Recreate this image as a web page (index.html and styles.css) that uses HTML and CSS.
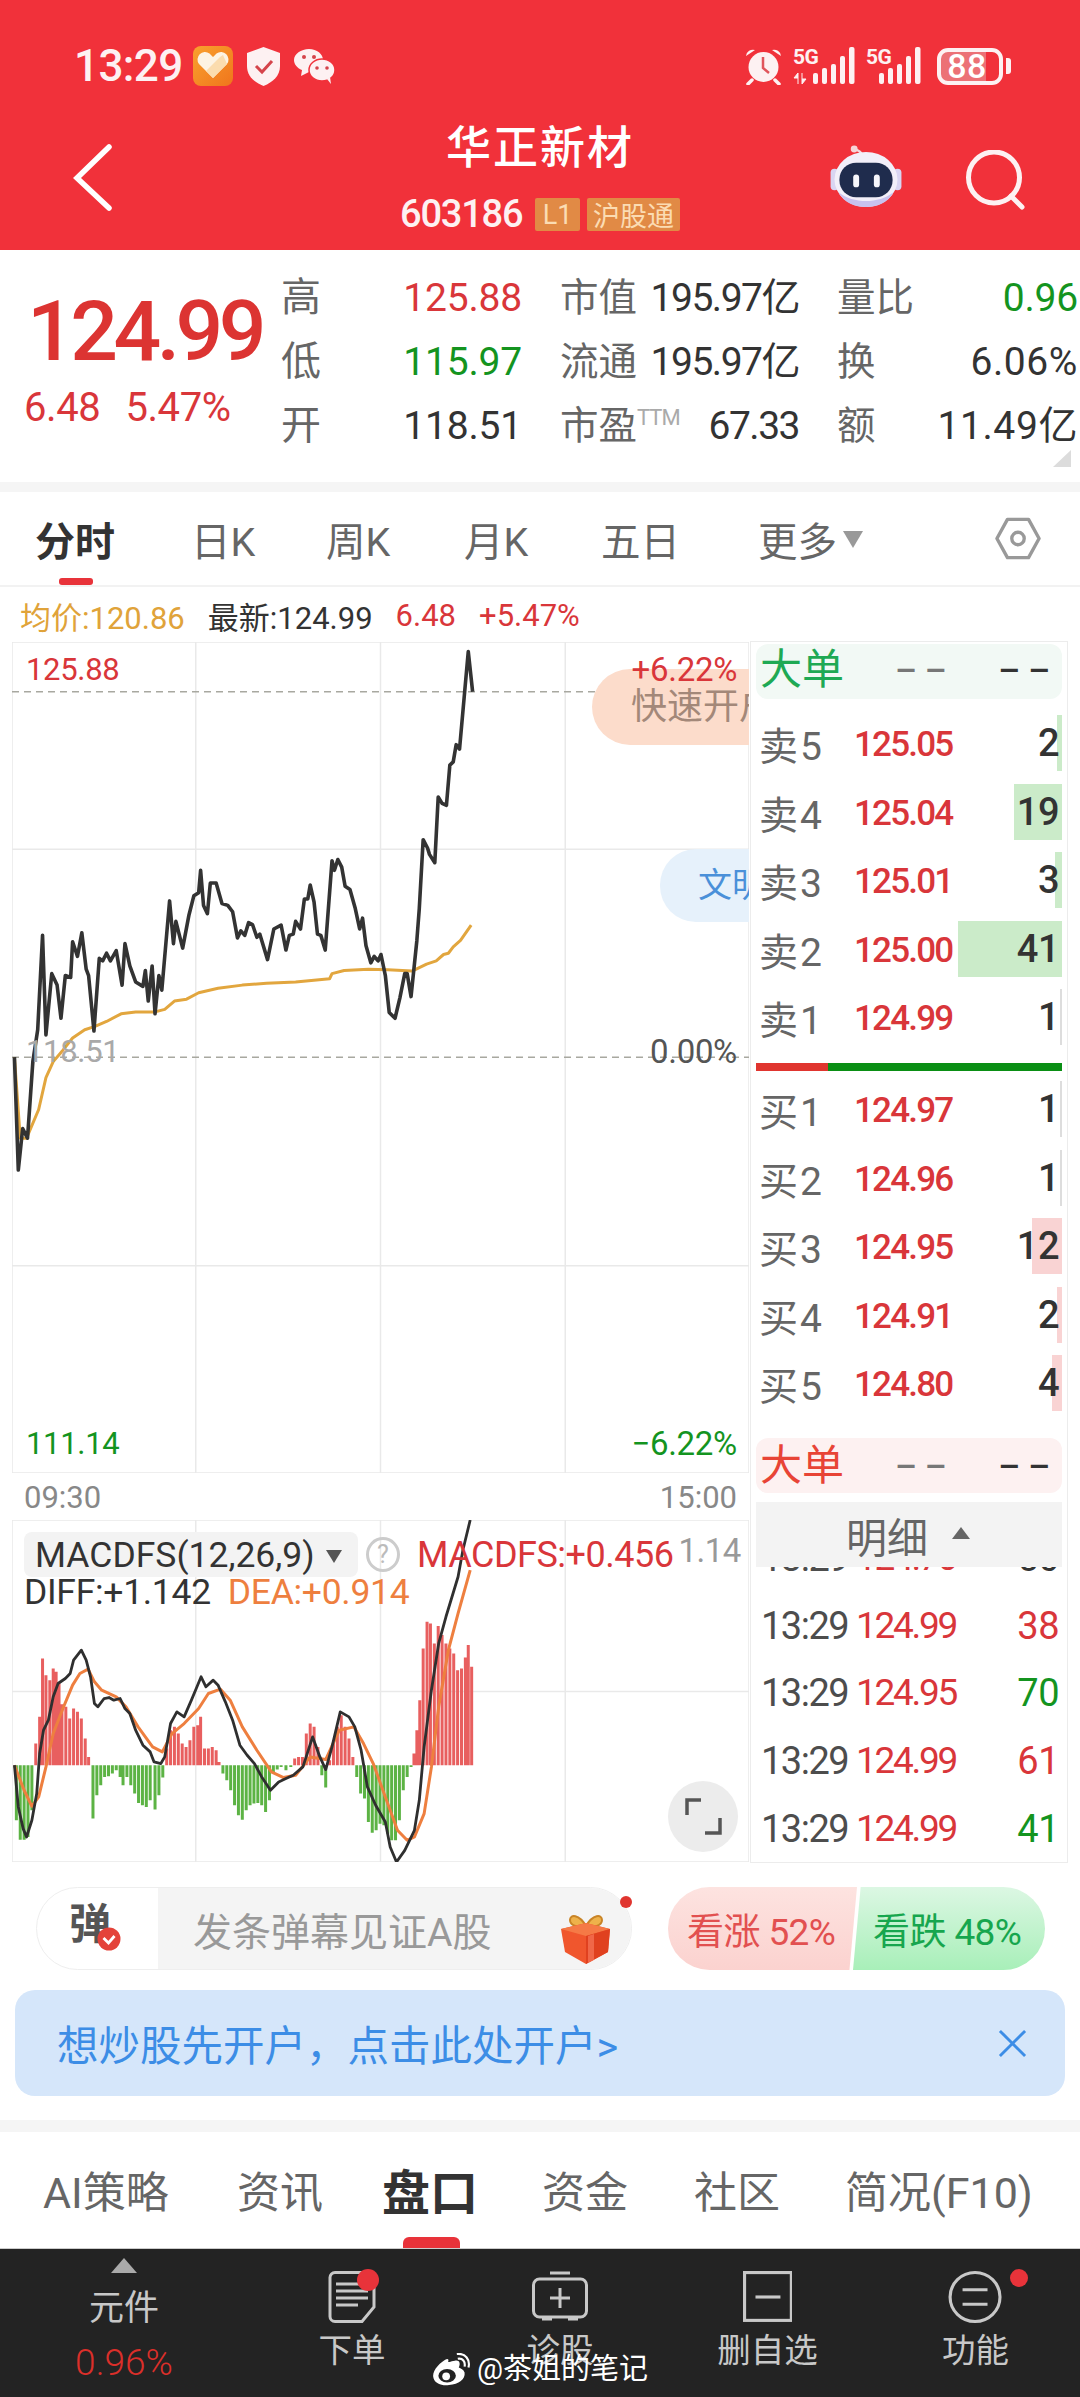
FILE: index.html
```html
<!DOCTYPE html>
<html lang="zh-CN">
<head>
<meta charset="utf-8">
<title>华正新材</title>
<link rel="stylesheet" href="styles.css">
</head>
<body>
<div class="page">
  <header class="appbar">
    <div class="status">
      <div class="status-left">
        <span class="clock">13:29</span>
        <svg class="ic-tile" viewBox="0 0 40 40"><defs><linearGradient id="tile" x1="0" y1="0" x2="1" y2="1"><stop offset="0" stop-color="#f9a12e"/><stop offset="1" stop-color="#f0751c"/></linearGradient></defs><rect width="40" height="40" rx="8" fill="url(#tile)"/><path d="M20 32 6 18a7.5 7.5 0 0 1 10.500-10.500L20 11l3.500-3.500A7.500 7.500 0 0 1 34 18z" fill="#fdf3e3"/><path d="M20 32 13 25 27 11l3-2 4 9z" fill="#fbdcae"/></svg>
        <svg class="ic-shield" viewBox="0 0 35 39"><path d="M17.500 0 34 6v13c0 10-7 16-16.500 20C8 35 1 29 1 19V6z" fill="#fdf1f2"/><path d="M10 19l6 6 10-11" fill="none" stroke="#d5444b" stroke-width="3"/></svg>
        <svg class="ic-wechat" viewBox="0 0 41 35"><path d="M15 0c8 0 14 5 14 11 0 7-6 12-14 12l-8 4 1-6C3 19 0 15 0 11 0 5 7 0 15 0z" fill="#fdf1f2"/><ellipse cx="28" cy="21" rx="13" ry="11" fill="#fdf1f2" stroke="#f1313a" stroke-width="1.500"/><path d="M33 30l4 5-1-7z" fill="#fdf1f2"/><circle cx="10" cy="8" r="2" fill="#d5444b"/><circle cx="20" cy="8" r="2" fill="#d5444b"/><circle cx="23" cy="19" r="1.800" fill="#d5444b"/><circle cx="33" cy="19" r="1.800" fill="#d5444b"/></svg>
      </div>
      <div class="status-right">
        <svg class="ic-alarm" viewBox="0 0 37 38"><circle cx="18.500" cy="20" r="15" fill="#fdf1f2"/><path d="M1 9a7 7 0 0 1 9-6zM36 9a7 7 0 0 0-9-6z" fill="#fdf1f2"/><path d="M7 33l-4 4M30 33l4 4" stroke="#fdf1f2" stroke-width="3.500" stroke-linecap="round"/><path d="M18 10v11l6 5" fill="none" stroke="#e0555c" stroke-width="2.500"/></svg>
        <div class="sig sig1"><span class="sig-txt">5G</span>
          <svg viewBox="0 0 62 38"><path d="M5 37V26l-4 5h4M9 26v11l4-5H9" fill="#fdf1f2" stroke="#fdf1f2" stroke-width="1"/><g fill="#fdf1f2"><rect x="20" y="26" width="5" height="11" rx="2"/><rect x="29" y="21" width="5" height="16" rx="2"/><rect x="38" y="17" width="5" height="20" rx="2"/><rect x="47" y="9" width="5" height="28" rx="2"/><rect x="56" y="0" width="5.500" height="37" rx="2"/></g></svg></div>
        <div class="sig sig2"><span class="sig-txt">5G</span>
          <svg viewBox="0 0 56 38"><g fill="#fdf1f2"><rect x="13" y="26" width="5" height="11" rx="2"/><rect x="22" y="21" width="5" height="16" rx="2"/><rect x="31" y="17" width="5" height="20" rx="2"/><rect x="40" y="9" width="5" height="28" rx="2"/><rect x="49" y="0" width="5.500" height="37" rx="2"/></g></svg></div>
        <div class="battery"><span class="battery-num">88</span></div>
        <span class="battery-nub"></span>
      </div>
    </div>
    <div class="nav">
      <svg class="ic-back" viewBox="0 0 42 68"><path d="M36 3 4 34l32 30" fill="none" stroke="#fff" stroke-width="5.500" stroke-linecap="round"/></svg>
      <div class="nav-center">
        <div class="title">华正新材</div>
        <div class="code"><span class="code-num">603186</span><span class="badge badge-l1">L1</span><span class="badge badge-hk">沪股通</span></div>
      </div>
      <div class="nav-actions">
        <svg class="ic-robot" viewBox="0 0 72 64"><path d="M32 10C30 5 26 5 23 4" fill="none" stroke="#f3d9df" stroke-width="2.500"/><circle cx="24" cy="4" r="3.500" fill="#f6d4d8"/><rect x="0" y="24" width="8" height="22" rx="4" fill="#d9d5f2"/><rect x="64" y="24" width="8" height="22" rx="4" fill="#d9d5f2"/><ellipse cx="36" cy="35" rx="32" ry="28" fill="#f2eff9"/><path d="M8 48c6 11 17 15 28 15s22-4 28-15c-8 6-18 9-28 9S16 54 8 48z" fill="#c8c2ee"/><rect x="9" y="18" width="54" height="35" rx="17" fill="#1f2c4d"/><rect x="23" y="30" width="6" height="13" rx="3" fill="#f6f6fb"/><rect x="44" y="30" width="6" height="13" rx="3" fill="#f6f6fb"/></svg>
        <svg class="ic-search" viewBox="0 0 60 60"><circle cx="29" cy="27.500" r="25.500" fill="none" stroke="#fdf1f2" stroke-width="5"/><path d="M46 46l11 11" stroke="#fdf1f2" stroke-width="5" stroke-linecap="round"/></svg>
      </div>
    </div>
  </header>

  <section class="quote">
    <div class="quote-main">
      <div class="price-big">124.99</div>
      <div class="price-sub"><span>6.48</span><span>5.47%</span></div>
    </div>
    <div class="quote-grid">
      <span class="q-label">高</span><span class="q-val red">125.88</span>
      <span class="q-label q-pad">市值</span><span class="q-val q-tight dark">195.97亿</span>
      <span class="q-label q-pad">量比</span><span class="q-val green">0.96</span>
      <span class="q-label">低</span><span class="q-val green">115.97</span>
      <span class="q-label q-pad">流通</span><span class="q-val q-tight dark">195.97亿</span>
      <span class="q-label q-pad">换</span><span class="q-val q-wide dark">6.06%</span>
      <span class="q-label">开</span><span class="q-val dark">118.51</span>
      <span class="q-label q-pad">市盈<sup class="ttm">TTM</sup></span><span class="q-val q-tight dark">67.33</span>
      <span class="q-label q-pad">额</span><span class="q-val q-wide dark">11.49亿</span>
    </div>
    <span class="corner"></span>
  </section>
  <div class="strip"></div>

  <nav class="period-tabs">
    <span class="ptab ptab-on">分时</span>
    <span class="ptab">日K</span>
    <span class="ptab">周K</span>
    <span class="ptab">月K</span>
    <span class="ptab">五日</span>
    <span class="ptab">更多<i class="caret"></i></span>
    <svg class="ic-hex" viewBox="0 0 48 44"><path d="M13 2h22l11 20-11 20H13L2 22z" fill="none" stroke="#999" stroke-width="3.500" stroke-linejoin="round"/><circle cx="24" cy="22" r="6.500" fill="none" stroke="#999" stroke-width="3.500"/></svg>
  </nav>

  <div class="info-row">
    <span class="orange">均价:120.86</span>
    <span class="dark">最新:124.99</span>
    <span class="red">6.48</span>
    <span class="red">+5.47%</span>
  </div>

  <div class="board">
    <div class="charts">
      <div class="main-chart">
        <svg class="chart-svg" viewBox="25 222 1520 1303" preserveAspectRatio="none">
          <rect x="25" y="222" width="1520" height="1303" class="grid"/>
          <path d="M404 222V1525M785 222V1525M1166 222V1525M25 547H1545M25 1200H1545" class="grid"/>
          <path d="M25 300H1545M25 873H1545" class="dash"/>
          <polyline class="avg" points="30,873 42,1000 55,1000 80,955 95,905 110,880 130,862 150,843 175,830 195,825 220,817 250,805 280,802 320,802 340,798 360,785 385,782 410,772 450,765 500,760 550,757 610,755 680,750 685,742 710,737 760,735 800,736 850,738 880,727 900,722 915,712 925,710 935,700 950,690 972,666"/>
          <polyline class="px" points="30,873 38,1050 47,985 57,1000 68,880 78,830 88,682 95,838 107,742 118,760 126,812 135,745 146,748 150,692 160,715 169,678 178,735 183,745 194,832 205,718 212,722 220,710 228,722 240,706 252,760 258,695 268,730 280,755 295,762 300,737 306,785 314,730 320,805 328,745 334,768 350,628 358,695 363,660 377,702 390,650 400,620 410,615 414,580 420,635 428,648 434,600 446,600 458,632 470,635 480,645 490,686 497,675 505,682 513,662 521,665 530,685 536,680 552,720 565,672 580,666 590,705 597,682 605,680 610,660 620,672 628,625 635,625 640,603 648,630 655,680 662,682 671,705 685,565 690,580 697,563 705,575 712,605 722,610 733,640 742,672 748,655 755,698 765,725 772,715 780,722 786,712 795,745 803,803 815,812 825,780 835,742 840,742 848,778 860,690 865,640 873,532 882,545 886,555 897,568 904,465 912,475 921,478 928,415 935,410 941,383 948,390 966,237 975,300"/>
        </svg>
        <div class="float-open">快速开户</div>
        <div class="float-doc">文明</div>
        <span class="lab lab-tl red">125.88</span>
        <span class="lab lab-tr red">+6.22%</span>
        <span class="lab lab-ml grayl">118.51</span>
        <span class="lab lab-mr gray5">0.00%</span>
        <span class="lab lab-bl green">111.14</span>
        <span class="lab lab-br green">−6.22%</span>
      </div>
      <div class="axis"><span>09:30</span><span>15:00</span></div>
      <div class="macd">
        <svg class="chart-svg" viewBox="25 60 1520 1025" preserveAspectRatio="none">
          <rect x="25" y="60" width="1520" height="1025" class="grid"/>
          <path d="M404 60V1085M785 60V1085M1166 60V1085M25 574H1545" class="grid"/>
          <path class="hist-r" d="M74 795V730M82 795V650M88 795V475M95 795V525M103 795V540M110 795V505M116 795V515M122 795V550M128 795V612M136 795V620M144 795V655M152 795V625M160 795V635M168 795V655M176 795V715M183 795V770M344 795V745M352 795V690M360 795V680M368 795V700M376 795V730M384 795V740M392 795V720M400 795V680M408 795V675M414 795V650M422 795V745M430 795V745M438 795V740M446 795V750M452 795V785M608 795V775M616 795V770M624 795V770M632 795V700M640 795V670M648 795V680M656 795V740M680 795V780M688 795V720M696 795V680M704 795V645M712 795V680M720 795V715M728 795V770M854 795V760M860 795V690M866 795V600M873 795V445M881 795V365M888 795V370M896 795V430M904 795V378M912 795V405M920 795V430M928 795V445M936 795V460M944 795V510M952 795V505M960 795V472M966 795V435M973 795V500"/>
          <path class="hist-g" d="M34 795V960M42 795V1018M50 795V1018M58 795V1010M66 795V930M192 795V955M200 795V885M208 795V855M216 795V830M224 795V828M232 795V820M240 795V810M248 795V830M254 795V855M262 795V830M270 795V855M278 795V880M286 795V908M294 795V915M302 795V920M310 795V900M320 795V928M328 795V885M336 795V832M460 795V820M468 795V840M476 795V870M484 795V915M492 795V945M500 795V958M508 795V930M516 795V915M524 795V910M532 795V908M540 795V915M548 795V935M556 795V900M564 795V820M572 795V808M580 795V800M590 795V810M600 795V800M664 795V825M672 795V862M736 795V830M744 795V880M752 795V895M760 795V965M768 795V997M776 795V990M784 795V970M792 795V975M800 795V1000M808 795V1020M816 795V1020M824 795V960M832 795V870M840 795V830M848 795V800"/>
          <polyline class="dea" points="30,795 50,870 66,918 80,890 95,800 110,700 130,625 150,555 165,520 182,507 195,545 210,570 240,590 260,620 285,680 315,740 335,755 355,700 380,670 410,625 430,580 455,567 475,600 500,680 530,750 560,815 585,832 610,825 640,770 672,778 700,690 730,680 750,730 770,790 795,890 820,990 840,1020 855,1010 875,940 890,800 905,620 925,450 945,340 970,210"/>
          <polyline class="diff" points="30,795 38,920 48,985 55,1010 66,960 76,880 82,760 90,690 100,660 110,590 120,550 135,535 145,520 152,480 168,450 178,480 187,530 195,610 202,620 215,595 225,592 235,600 248,595 258,625 268,640 280,690 295,735 310,755 318,785 332,790 340,770 352,670 365,635 380,650 395,600 405,565 415,530 425,560 440,540 450,555 465,605 480,660 495,735 510,765 525,790 540,830 558,870 575,845 590,835 605,825 625,800 645,710 660,770 672,808 685,740 702,635 720,650 732,680 745,750 758,860 775,915 795,965 805,1040 818,1085 835,1050 855,990 865,900 875,740 890,570 905,430 920,350 945,230 955,150 970,60"/>
        </svg>
        <div class="legend">
          <div class="legend-row">
            <span class="pill">MACDFS(12,26,9)<i class="caret caret-dark"></i></span>
            <span class="help">?</span>
            <span class="red legend-val">MACDFS:+0.456</span>
            <span class="legend-max">1.14</span>
          </div>
          <div class="legend-row legend-row2">
            <span class="dark">DIFF:+1.142</span>
            <span class="dea-txt">DEA:+0.914</span>
          </div>
        </div>
        <div class="expand"><svg viewBox="0 0 70 71"><path d="M19 34V19H33M52 37V52H37" fill="none" stroke="#555" stroke-width="3.500"/></svg></div>
      </div>
    </div>

    <aside class="book">
      <div class="big-order big-buy"><span class="bo-name">大单</span><span class="bo-a">––</span><span class="bo-b">––</span></div>
      <div class="levels levels-sell">
        <div class="lvl"><i class="bar bar-g" style="width:5px"></i><span class="lvl-n">卖5</span><span class="lvl-p">125.05</span><span class="lvl-q">2</span></div>
        <div class="lvl"><i class="bar bar-g" style="width:48px"></i><span class="lvl-n">卖4</span><span class="lvl-p">125.04</span><span class="lvl-q">19</span></div>
        <div class="lvl"><i class="bar bar-g" style="width:7px"></i><span class="lvl-n">卖3</span><span class="lvl-p">125.01</span><span class="lvl-q">3</span></div>
        <div class="lvl"><i class="bar bar-g" style="width:104px"></i><span class="lvl-n">卖2</span><span class="lvl-p">125.00</span><span class="lvl-q">41</span></div>
        <div class="lvl"><i class="bar bar-n" style="width:2px"></i><span class="lvl-n">卖1</span><span class="lvl-p">124.99</span><span class="lvl-q">1</span></div>
      </div>
      <div class="ratio"><span class="ratio-r"></span></div>
      <div class="levels levels-buy">
        <div class="lvl"><i class="bar bar-n" style="width:2px"></i><span class="lvl-n">买1</span><span class="lvl-p">124.97</span><span class="lvl-q">1</span></div>
        <div class="lvl"><i class="bar bar-n" style="width:2px"></i><span class="lvl-n">买2</span><span class="lvl-p">124.96</span><span class="lvl-q">1</span></div>
        <div class="lvl"><i class="bar bar-r" style="width:30px"></i><span class="lvl-n">买3</span><span class="lvl-p">124.95</span><span class="lvl-q">12</span></div>
        <div class="lvl"><i class="bar bar-r" style="width:5px"></i><span class="lvl-n">买4</span><span class="lvl-p">124.91</span><span class="lvl-q">2</span></div>
        <div class="lvl"><i class="bar bar-r" style="width:10px"></i><span class="lvl-n">买5</span><span class="lvl-p">124.80</span><span class="lvl-q">4</span></div>
      </div>
      <div class="big-order big-sell"><span class="bo-name">大单</span><span class="bo-a">––</span><span class="bo-b">––</span></div>
      <div class="detail-head">明细<i class="caret-up"></i></div>
      <div class="ticks">
        <div class="tick tick-first"><span class="t-time">13:29</span><span class="t-price red">124.70</span><span class="t-qty dark">50</span></div>
        <div class="tick"><span class="t-time">13:29</span><span class="t-price red">124.99</span><span class="t-qty red">38</span></div>
        <div class="tick"><span class="t-time">13:29</span><span class="t-price red">124.95</span><span class="t-qty green">70</span></div>
        <div class="tick"><span class="t-time">13:29</span><span class="t-price red">124.99</span><span class="t-qty red">61</span></div>
        <div class="tick"><span class="t-time">13:29</span><span class="t-price red">124.99</span><span class="t-qty green">41</span></div>
      </div>
    </aside>
  </div>

  <div class="actions">
    <div class="danmaku">
      <div class="dm-tag"><span class="dm-char">弹</span><svg class="dm-check" viewBox="0 0 24 24"><circle cx="12" cy="12" r="11.500" fill="#e4433a"/><path d="M6.500 11l5 5 6-7" fill="none" stroke="#fff" stroke-width="2.800"/></svg></div>
      <div class="dm-input">
        <span class="dm-text">发条弹幕见证A股</span>
        <svg class="dm-gift" viewBox="0 0 50 52"><path d="M25 14C18 2 9 2 9 8s9 8 16 6c7 2 16 0 16-6s-9-6-16 6z" fill="#eeb24b" stroke="#c98427" stroke-width="2"/><path d="M0 17l25-6 24 6-2 23-22 12-21-12z" fill="#f0562d"/><path d="M0 17l25 7 24-7-24-6z" fill="#f57a46"/><path d="M25 24v28l22-12 2-23z" fill="#e0411f"/><path d="M27 24v27l6-3V22z" fill="#f6785a" opacity=".7"/></svg>
      </div>
      <i class="dm-dot"></i>
    </div>
    <div class="vote">
      <span class="vote-up">看涨 52%</span>
      <span class="vote-down">看跌 48%</span>
    </div>
  </div>

  <div class="banner">
    <span>想炒股先开户，点击此处开户&gt;</span>
    <svg class="ic-x" viewBox="0 0 30 30"><path d="M2 2l26 26M28 2 2 28" stroke="#3c8de6" stroke-width="3" fill="none"/></svg>
  </div>
  <div class="strip strip-b"></div>

  <nav class="sub-tabs">
    <span class="stab">AI策略</span>
    <span class="stab">资讯</span>
    <span class="stab stab-on">盘口</span>
    <span class="stab">资金</span>
    <span class="stab">社区</span>
    <span class="stab">简况(F10)</span>
  </nav>

  <footer class="bottom">
    <div class="bitem bitem-first">
      <i class="tri"></i>
      <span class="blabel">元件</span>
      <span class="bred">0.96%</span>
    </div>
    <div class="bitem">
      <div class="bicon">
        <svg class="bsvg" viewBox="0 0 48 52"><path d="M7 1.500H41a5 5 0 0 1 5 5V36L34 50.500H7a5 5 0 0 1-5-5V6.500a5 5 0 0 1 5-5z" class="bstroke"/><path d="M8 13H34M8 20H40M8 27H40M8 34H30" class="bstroke"/></svg>
        <i class="bdot bdot-order"></i>
      </div>
      <span class="blabel">下单</span>
    </div>
    <div class="bitem">
      <div class="bicon">
        <svg class="bsvg" viewBox="0 0 56 52"><path d="M18 2H38" class="bstroke"/><rect x="1.500" y="8" width="53" height="38" rx="6" class="bstroke"/><path d="M28 17V37M18 27H38M10 48H20M36 48H46" class="bstroke"/></svg>
      </div>
      <span class="blabel">诊股</span>
    </div>
    <div class="bitem">
      <div class="bicon">
        <svg class="bsvg" viewBox="0 0 48 50"><rect x="1.500" y="1.500" width="45" height="46" class="bstroke"/><path d="M12 25H36" class="bstroke"/></svg>
      </div>
      <span class="blabel">删自选</span>
    </div>
    <div class="bitem">
      <div class="bicon">
        <svg class="bsvg" viewBox="0 0 52 50"><ellipse cx="26" cy="25" rx="24" ry="23.500" class="bstroke"/><path d="M14 18H38M14 32H38" class="bstroke"/></svg>
        <i class="bdot bdot-fn"></i>
      </div>
      <span class="blabel">功能</span>
    </div>
  </footer>

  <div class="watermark">
    <svg class="wb" viewBox="0 0 38 34"><path d="M13 7C5 12-1 20 1 26c2 6 9 8 16 7 10-1 17-6 16-13-1-3-4-4-6-5 2-4 1-8-4-7-3 0-5 2-7 1 1-2 0-4-3-2z" fill="#fff"/><ellipse cx="15" cy="23.500" rx="9" ry="7" fill="#232323"/><circle cx="14" cy="24" r="4" fill="#fff"/><path d="M26 6c5-1 8 3 7 8M25 1c9-1 14 6 12 14" fill="none" stroke="#fff" stroke-width="2.200"/></svg>
    <span>@茶姐的笔记</span>
  </div>
</div>
</body>
</html>
```
FILE: styles.css
```css
* { box-sizing: border-box; }
html, body { margin: 0; padding: 0; background: #fff; }
body { width: 1080px; height: 2397px; overflow: hidden; font-family: Roboto, "Noto Sans CJK SC", sans-serif; color: #333; }
i { font-style: normal; display: block; }
svg { display: block; }
.page { position: relative; width: 1080px; height: 2397px; display: flex; flex-direction: column; overflow: hidden; }

.red { color: #d9363a; }
.green { color: #14941f; }
.dark { color: #333; }
.orange { color: #e0a33a; }
.grayl { color: #a9a9a9; }
.gray5 { color: #555; }

/* app bar */
.appbar { height: 250px; flex: none; background: #f1313a; padding-top: 46px; color: #fff; }
.status { display: flex; justify-content: space-between; align-items: center; height: 40px; padding: 0 69px 0 74px; }
.status-left, .status-right { display: flex; align-items: center; }
.clock { width: 119px; font-size: 44px; font-weight: 500; line-height: 40px; color: #fdf1f2; letter-spacing: -.6px; }
.ic-tile { width: 40px; height: 40px; }
.ic-shield { width: 35px; height: 39px; margin-left: 13px; }
.ic-wechat { width: 41px; height: 35px; margin-left: 13px; }
.ic-alarm { width: 37px; height: 38px; }
.sig { position: relative; height: 38px; margin-left: 11px; }
.sig svg { width: 100%; height: 38px; }
.sig1 { width: 62px; }
.sig2 { width: 56px; }
.sig-txt { position: absolute; left: 0; top: 0; font-size: 21px; line-height: 20px; font-weight: 700; color: #fdf1f2; letter-spacing: -.5px; }
.battery { width: 66px; height: 37px; margin-left: 15px; border: 4px solid #fdf1f2; border-radius: 11px; background: linear-gradient(90deg, #ec7176 0 78%, transparent 78%); display: flex; align-items: center; justify-content: center; }
.battery-num { font-size: 34px; font-weight: 500; line-height: 30px; color: #fff; margin-right: 6px; letter-spacing: .5px; }
.battery-nub { width: 5px; height: 16px; margin-left: 3px; background: #fdf1f2; border-radius: 0 3px 3px 0; }
.nav { position: relative; height: 120px; margin-top: 34px; display: flex; justify-content: center; }
.ic-back { position: absolute; left: 73px; top: 24px; width: 42px; height: 68px; }
.nav-center { display: flex; flex-direction: column; align-items: center; padding-top: 5px; }
.title { height: 48px; line-height: 48px; font-size: 45px; font-weight: 500; letter-spacing: 2px; }
.code { display: flex; height: 33px; margin-top: 25px; align-items: stretch; }
.code-num { width: 135px; font-size: 38px; font-weight: 500; line-height: 33px; letter-spacing: -1.200px; color: #fdf1f2; }
.badge { display: flex; align-items: center; justify-content: center; background: #e18a45; color: #fbdcb3; font-size: 27px; border-radius: 2px; }
.badge-l1 { width: 45px; }
.badge-hk { width: 93px; margin-left: 7px; }
.nav-actions { position: absolute; left: 830px; top: 25px; display: flex; align-items: flex-start; }
.ic-robot { width: 72px; height: 63px; }
.ic-search { width: 60px; height: 60px; margin: 5px 0 0 63px; }

/* quote */
.quote { position: relative; height: 232px; flex: none; display: flex; }
.quote-main { width: 281px; flex: none; display: flex; flex-direction: column; }
.price-big { margin: 40px 0 0 27px; font-size: 84px; line-height: 84px; font-weight: 500; color: #dc3432; letter-spacing: -4.500px; white-space: nowrap; }
.price-sub { display: flex; gap: 25px; margin: 16px 0 0 24px; font-size: 40px; line-height: 36px; color: #d9363a; letter-spacing: -.4px; }
.quote-grid { margin-top: 16px; display: grid; grid-template-columns: 60px 181px 118px 159px 124px 155px; grid-auto-rows: 64px; align-items: center; }
.q-label { font-size: 40px; line-height: 64px; color: #666; white-space: nowrap; }
.q-pad { padding-left: 38px; font-size: 38.500px; }
.q-val { text-align: right; font-size: 39px; line-height: 64px; letter-spacing: -.2px; white-space: nowrap; font-weight: 400; }
.q-tight { letter-spacing: -1.500px; }
.q-wide { letter-spacing: .6px; }
.ttm { font-size: 22px; line-height: 0; color: #aaa; vertical-align: 14px; letter-spacing: -1px; }
.corner { position: absolute; right: 9px; top: 200px; width: 18px; height: 17px; background: #dcdcdc; clip-path: polygon(100% 0, 100% 100%, 0 100%); }
.strip { height: 10px; flex: none; background: #f5f5f5; }

/* period tabs */
.period-tabs { height: 95px; flex: none; display: grid; grid-template-columns: 156px 135px 138px 137px 157px 237px 1fr; padding-left: 35px; border-bottom: 2px solid #f2f2f2; }
.ptab { position: relative; display: flex; align-items: center; font-size: 39.500px; color: #666; height: 93px; }
.ptab-on { font-size: 40px; font-weight: 700; color: #333; }
.ptab-on::after { content: ""; position: absolute; left: 24px; bottom: 0; width: 34px; height: 7px; border-radius: 3px; background: #e8333a; }
.caret { width: 0; height: 0; margin: 2px 0 0 6px; border-left: 10px solid transparent; border-right: 10px solid transparent; border-top: 17px solid #999; }
.ic-hex { width: 46px; height: 43px; align-self: center; }

/* info */
.info-row { height: 54px; flex: none; display: flex; align-items: center; gap: 23px; padding: 2px 0 0 20px; font-size: 31px; letter-spacing: 0; white-space: nowrap; }

/* board */
.board { height: 1222px; flex: none; display: flex; }
.charts { width: 750px; flex: none; padding: 1px 0 0 12px; }
.main-chart { position: relative; width: 737px; height: 831px; overflow: hidden; }
.chart-svg { width: 100%; height: 100%; }
.chart-svg * { vector-effect: non-scaling-stroke; fill: none; }
.grid { stroke: #e9e9e9; stroke-width: 1.500; }
.dash { stroke: #a8a8a0; stroke-width: 1.500; stroke-dasharray: 7 5; }
.avg { stroke: #e2a63e; stroke-width: 3; stroke-linejoin: round; }
.px { stroke: #333; stroke-width: 3.600; stroke-linejoin: round; }
.dea { stroke: #ee7f3f; stroke-width: 3; stroke-linejoin: round; }
.diff { stroke: #2f2f2f; stroke-width: 2.800; stroke-linejoin: round; }
.hist-r { stroke: #e85f5f; stroke-width: 3; }
.hist-g { stroke: #5cb344; stroke-width: 3; }
.lab { position: absolute; font-size: 31px; line-height: 40px; letter-spacing: -.3px; white-space: nowrap; }
.lab-tl { left: 14px; top: 8px; }
.lab-tr { right: 12px; top: 8px; font-size: 33px; }
.lab-ml { left: 14px; top: 390px; }
.lab-mr { right: 12px; top: 390px; font-size: 33px; }
.lab-bl { left: 14px; top: 782px; }
.lab-br { right: 12px; top: 782px; font-size: 33px; }
.float-open { position: absolute; left: 580px; top: 27px; right: 0; height: 76px; padding-left: 39px; border-radius: 38px 0 0 38px; background: #fcdccb; color: #a38879; font-size: 36px; line-height: 76px; white-space: nowrap; overflow: hidden; }
.float-doc { position: absolute; left: 648px; top: 207px; right: 0; height: 73px; padding-left: 38px; border-radius: 36px 0 0 36px; background: #e6f1fb; color: #4a90d9; font-size: 34px; line-height: 73px; white-space: nowrap; overflow: hidden; }
.axis { height: 47px; display: flex; justify-content: space-between; align-items: center; padding: 2px 12px 0 12px; width: 737px; font-size: 31px; color: #888; }
.macd { position: relative; width: 737px; height: 342px; }
.legend { position: absolute; left: 0; top: 12px; right: 0; font-size: 35.500px; }
.legend-row { display: flex; align-items: center; height: 45px; white-space: nowrap; }
.legend-row2 { height: 36px; margin-top: -3px; padding-left: 12px; gap: 17px; font-size: 35.500px; letter-spacing: -.3px; }
.pill { width: 334px; height: 45px; margin-left: 12px; padding-left: 11px; display: flex; align-items: center; background: #f3f3f3; border-radius: 8px; color: #333; }
.caret-dark { margin: 4px 0 0 11px; border-left-width: 8px; border-right-width: 8px; border-top: 13px solid #555; }
.help { width: 34px; height: 35px; margin-left: 8px; border: 3px solid #ccc; border-radius: 50%; display: flex; align-items: center; justify-content: center; font-size: 25px; color: #bbb; }
.legend-val { margin-left: 17px; font-size: 36px; letter-spacing: -.5px; }
.legend-max { margin: 0 0 8px 5px; font-size: 33px; color: #999; letter-spacing: -.5px; }
.dea-txt { color: #ee7f3f; }
.expand { position: absolute; left: 656px; top: 261px; width: 70px; height: 71px; border-radius: 50%; background: #ececec; }
.expand svg { width: 70px; height: 71px; }

/* order book */
.book { width: 318px; flex: none; height: 1222px; border: 1px solid #ececec; padding: 2px 5px 0 5px; }
.big-order { height: 55px; display: flex; align-items: center; padding: 0 4px; border-radius: 12px; }
.big-buy { background: #f2f9f5; padding-bottom: 4px; }
.big-sell { background: #fdf1f1; margin-top: 27px; }
.bo-name { width: 146px; font-size: 42px; line-height: 55px; }
.bo-a, .bo-b { font-size: 34px; line-height: 40px; letter-spacing: 8px; white-space: nowrap; font-weight: 500; }
.big-buy .bo-name { color: #1fa954; }
.big-sell .bo-name { color: #e84436; }
.bo-a { width: 112px; color: #777; }
.bo-b { color: #333; }
.levels { display: flex; flex-direction: column; gap: 12.500px; }
.levels-sell { margin-top: 16px; }
.levels-buy { margin-top: 10px; }
.lvl { position: relative; height: 56px; display: flex; align-items: center; padding-right: 3px; }
.bar { position: absolute; right: 0; top: 0; bottom: 0; }
.bar-g { background: #cbebc9; }
.bar-r { background: #f9d3d3; }
.bar-n { background: #ddd; }
.lvl-n { position: relative; width: 98px; padding-left: 3px; font-size: 39px; color: #666; letter-spacing: 2px; white-space: nowrap; }
.lvl-p { position: relative; padding-top: 3px; font-size: 35px; font-weight: 500; letter-spacing: -1.800px; color: #d9363a; }
.lvl-q { position: relative; margin-left: auto; font-size: 38px; font-weight: 500; color: #333; letter-spacing: -.5px; }
.ratio { height: 8px; margin-top: 18px; background: #0a8f14; }
.ratio-r { display: block; width: 72px; height: 8px; background: #e0352f; }
.detail-head { position: relative; z-index: 1; height: 65px; margin-top: 9px; background: #f3f3f3; display: flex; align-items: center; justify-content: center; padding-right: 2px; font-size: 41px; color: #666; }
.caret-up { width: 0; height: 0; margin: -4px 0 0 24px; border-left: 9px solid transparent; border-right: 9px solid transparent; border-bottom: 12px solid #666; }
.ticks { height: 295px; overflow: hidden; }
.tick { height: 67.700px; display: flex; align-items: center; padding: 0 3px 0 5px; font-size: 38px; line-height: 40px; white-space: nowrap; }
.tick-first { margin-top: -43px; }
.t-time { width: 95px; color: #4d4d4d; letter-spacing: -1.500px; }
.t-price { width: 110px; font-size: 37px; letter-spacing: -2.300px; }
.t-qty { margin-left: auto; letter-spacing: -.5px; }

/* actions */
.actions { margin-top: 24px; height: 83px; flex: none; display: flex; justify-content: space-between; padding: 0 35px 0 36px; }
.danmaku { position: relative; width: 596px; height: 83px; display: flex; border: 1.500px solid #eee; border-radius: 42px; }
.dm-tag { position: relative; width: 121px; flex: none; }
.dm-char { position: absolute; left: 32px; top: 14px; font-size: 42px; line-height: 46px; font-weight: 700; color: #555; }
.dm-check { position: absolute; left: 60px; top: 39px; width: 24px; height: 24px; }
.dm-input { flex: 1; display: flex; align-items: center; background: #f4f4f4; border-radius: 0 41px 41px 0; }
.dm-text { width: 368px; margin-left: 35px; font-size: 39px; color: #999; white-space: nowrap; }
.dm-gift { width: 50px; height: 52px; margin: 18px 0 0 0; }
.dm-dot { position: absolute; right: -1px; top: 8px; width: 12px; height: 12px; border-radius: 50%; background: #e0352f; }
.vote { position: relative; width: 377px; height: 83px; border-radius: 42px; overflow: hidden; display: flex; }
.vote span { position: absolute; top: 0; height: 83px; display: flex; align-items: center; font-size: 37px; letter-spacing: -.6px; white-space: nowrap; }
.vote-up { left: 0; width: 189px; padding-left: 19px; color: #e25050; background: linear-gradient(#fde3e0, #fbd2cf); clip-path: polygon(0 0, 100% 0, 96% 100%, 0 100%); }
.vote-down { right: 0; width: 192px; padding-left: 20px; color: #17a64e; background: linear-gradient(#dcf7e3, #a8efb9); clip-path: polygon(4% 0, 100% 0, 100% 100%, 0 100%); }
.banner { margin: 20px 15px 0; height: 106px; flex: none; display: flex; align-items: center; justify-content: space-between; padding: 0 38px 0 42px; background: #d5e6fa; border-radius: 20px; color: #3c8de6; font-size: 41.500px; white-space: nowrap; }
.ic-x { width: 29px; height: 29px; }
.strip-b { height: 12px; margin-top: 24px; }

/* sub tabs */
.sub-tabs { height: 116px; flex: none; display: grid; grid-template-columns: 194px 145px 160px 152px 151px 1fr; padding-left: 43px; }
.stab { position: relative; display: flex; align-items: center; padding-bottom: 3px; font-size: 43px; color: #666; white-space: nowrap; }
.stab-on { font-size: 48px; font-weight: 700; color: #333; }
.stab-on::after { content: ""; position: absolute; left: 21px; bottom: 0; width: 57px; height: 11px; border-radius: 6px 6px 0 0; background: #e8333a; }

/* bottom */
.bottom { height: 149px; flex: none; display: grid; grid-template-columns: 248px 208px 208px 207px 209px; background: #232323; border-top: 1px solid #ccc; }
.bitem { display: flex; flex-direction: column; align-items: center; padding-top: 22px; color: #c8c8c8; }
.bitem-first { padding-top: 9px; }
.tri { width: 0; height: 0; border-left: 13px solid transparent; border-right: 13px solid transparent; border-bottom: 15px solid #aaa; }
.bitem-first .blabel { margin-top: 16px; font-size: 35px; }
.bicon { position: relative; height: 52px; display: flex; align-items: center; }
.bsvg { height: 52px; width: auto; }
.bstroke { fill: none; stroke: #c8c8c8; stroke-width: 3; }
.blabel { margin-top: 8px; font-size: 33.500px; line-height: 40px; white-space: nowrap; }
.bred { margin-top: 15px; font-size: 37px; line-height: 38px; font-weight: 300; color: #db2f2a; }
.bdot { position: absolute; border-radius: 50%; background: #e8333a; }
.bdot-order { width: 22px; height: 22px; right: -3px; top: -2px; }
.bdot-fn { width: 18px; height: 18px; right: -25px; top: -2px; }

.watermark { position: absolute; left: 431px; top: 2353px; display: flex; align-items: center; gap: 6px; color: #fff; font-size: 29px; line-height: 33px; white-space: nowrap; }
.wb { width: 40px; height: 33px; }
```
